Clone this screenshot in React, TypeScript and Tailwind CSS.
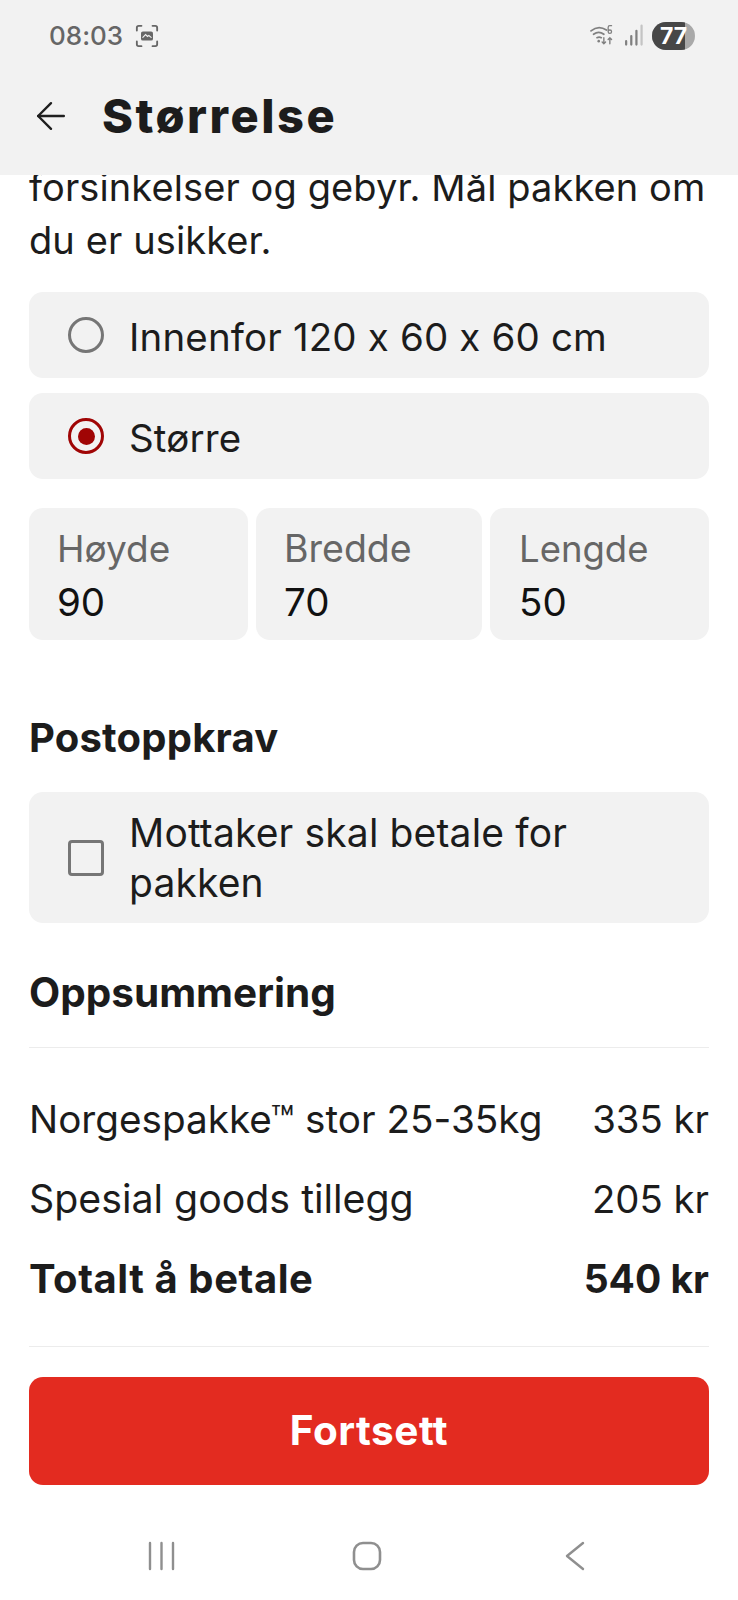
import { ArrowLeft } from "lucide-react";

function StatusBar() {
  return (
    <div className="flex h-[72px] items-center justify-between pl-[49px] pr-[43px]">
      <div className="flex items-center gap-[12px]">
        <span className="text-[26px] leading-none font-medium text-[#666666]">08:03</span>
        <svg width="24" height="24" viewBox="0 0 26 26" fill="none" stroke="#666666" strokeWidth="2" strokeLinecap="round">
          <path d="M2 7V4a2 2 0 0 1 2-2h3M19 2h3a2 2 0 0 1 2 2v3M24 19v3a2 2 0 0 1-2 2h-3M7 24H4a2 2 0 0 1-2-2v-3" />
          <rect x="6.5" y="8" width="13" height="10" rx="2" fill="#666666" stroke="none" />
          <path d="M8.5 14.5l3-3 2 2 1.5-1 2.5 2" stroke="#f2f2f2" strokeWidth="1.2" />
        </svg>
      </div>
      <div className="flex items-center gap-[6px]">
        <svg width="28" height="24" viewBox="0 0 32 28" fill="none" stroke="#808080" strokeLinecap="round">
          <path d="M2 8c6-5 12-5 18-1M5 12c4-3 8-3 12 0M9 16c2-1 3-1 5 0" strokeWidth="2" />
          <circle cx="11" cy="20" r="1.5" fill="#808080" stroke="none" />
          <path d="M17 16v7M15 21l2 2 2-2M24 23v-7M22 18l2-2 2 2" strokeWidth="1.6" />
          <path d="M26 2h-2a2 2 0 0 0-2 2v5a2 2 0 0 0 4 0 2 2 0 0 0-4 0" strokeWidth="1.5" />
        </svg>
        <svg width="20" height="24" viewBox="0 0 22 28" fill="none" strokeLinecap="round" strokeWidth="2.6">
          <path d="M3 24v-4M9 24V14M15 24V8" stroke="#808080" />
          <path d="M21 24V2" stroke="#c4c4c4" />
        </svg>
        <div className="relative ml-[3px] flex h-[28px] w-[43px] items-center justify-center overflow-hidden rounded-full bg-[#a9a9a9]">
          <div className="absolute inset-y-0 left-0 w-[33px] bg-[#474747]" />
          <span className="relative text-[23px] leading-none font-bold text-white">77</span>
        </div>
      </div>
    </div>
  );
}

function Header() {
  return (
    <header className="relative z-10 h-[175px] bg-[#f2f2f2]">
      <StatusBar />
      <div className="flex items-center pl-[29px] pt-[14px]">
        <ArrowLeft size={44} strokeWidth={1.3} className="text-[#1f1f1f]" />
        <h1 className="ml-[29px] text-[47px] leading-[60px] font-extrabold tracking-[2.5px] text-[#1c1c1c]">Størrelse</h1>
      </div>
    </header>
  );
}

function Radio({ checked }: { checked?: boolean }) {
  if (checked) {
    return (
      <span className="flex h-[36px] w-[36px] shrink-0 items-center justify-center rounded-full border-[3px] border-[#a00505]">
        <span className="h-[17px] w-[17px] rounded-full bg-[#a00505]" />
      </span>
    );
  }
  return <span className="h-[36px] w-[36px] shrink-0 rounded-full border-[3px] border-[#767676]" />;
}

function OptionRow({ label, checked }: { label: string; checked?: boolean }) {
  return (
    <div className="flex h-[86px] items-center gap-[25px] rounded-[14px] bg-[#f2f2f2] pl-[39px]">
      <Radio checked={checked} />
      <span className="pt-[3px] text-[38.5px] leading-[50px] tracking-[0.15px] text-[#1c1c1c]">{label}</span>
    </div>
  );
}

function SizeField({ label, value, className, labelClass }: { label: string; value: string; className: string; labelClass: string }) {
  return (
    <div className={`h-[132px] rounded-[14px] bg-[#f2f2f2] pt-[18px] ${className}`}>
      <div className={`leading-[46px] text-[#666666] ${labelClass}`}>{label}</div>
      <div className="mt-[7px] text-[38.5px] leading-[46px] text-[#111111]">{value}</div>
    </div>
  );
}

function PriceRow({ label, price, labelClass, priceClass }: { label: string; price: string; labelClass: string; priceClass: string }) {
  return (
    <div className="flex h-[80px] items-center justify-between text-[#1c1c1c]">
      <span className={`leading-[50px] ${labelClass}`}>{label}</span>
      <span className={`leading-[50px] ${priceClass}`}>{price}</span>
    </div>
  );
}

export default function App() {
  return (
    <div className="flex h-[1600px] w-[738px] flex-col overflow-hidden bg-white font-['Inter',sans-serif] [font-feature-settings:'calt'_0]">
      <Header />
      <main className="flex flex-1 flex-col px-[29px]">
        <p className="mt-[-14px] text-[38px] leading-[53px] tracking-[0.1px] text-[#1c1c1c] whitespace-nowrap">
          forsinkelser og gebyr. Mål pakken om
          <br />
          du er usikker.
        </p>

        <div className="mt-[25px] flex flex-col gap-[15px]">
          <OptionRow label="Innenfor 120 x 60 x 60 cm" />
          <OptionRow label="Større" checked />
        </div>

        <div className="mt-[29px] flex gap-[8px]">
          <SizeField label="Høyde" value="90" labelClass="text-[37px]" className="w-[219px] pl-[28px]" />
          <SizeField label="Bredde" value="70" labelClass="text-[37.5px]" className="w-[226px] pl-[28px]" />
          <SizeField label="Lengde" value="50" labelClass="text-[36.5px]" className="w-[219px] pl-[29px]" />
        </div>

        <h2 className="mt-[73px] text-[40px] leading-[50px] font-bold tracking-[0.2px] text-[#1c1c1c]">Postoppkrav</h2>

        <div className="mt-[29px] flex h-[131px] items-center gap-[25px] rounded-[14px] bg-[#f2f2f2] pl-[39px]">
          <span className="h-[36px] w-[36px] shrink-0 rounded-[4px] border-[3px] border-[#767676]" />
          <span className="text-[39px] leading-[50px] tracking-[0.15px] text-[#1c1c1c]">
            Mottaker skal betale for
            <br />
            pakken
          </span>
        </div>

        <h2 className="mt-[44px] text-[40.5px] leading-[52px] font-bold text-[#1c1c1c]">Oppsummering</h2>

        <div className="mt-[28px] border-t border-[#ececec] pt-[31px] pb-[27px]">
          <PriceRow label="Norgespakke™ stor 25-35kg" price="335 kr" labelClass="text-[38.7px]" priceClass="text-[38.3px]" />
          <PriceRow label="Spesial goods tillegg" price="205 kr" labelClass="text-[39.3px]" priceClass="text-[38.3px]" />
          <PriceRow label="Totalt å betale" price="540 kr" labelClass="text-[40px] font-bold tracking-[0.55px]" priceClass="text-[39px] font-bold" />
        </div>

        <div className="border-t border-[#ececec] pt-[30px]">
          <button className="flex h-[108px] w-full items-center justify-center rounded-[14px] bg-[#e32b20] text-[40.5px] font-bold tracking-[0.5px] text-white">
            Fortsett
          </button>
        </div>

        <nav className="mt-[56px] flex items-center pl-[119px]">
          <svg width="27" height="30" viewBox="0 0 27 30" fill="none" stroke="#8f8f8f" strokeWidth="2.4" strokeLinecap="round">
            <path d="M2 2v26M13.5 2v26M25 2v26" />
          </svg>
          <svg className="ml-[177px]" width="30" height="30" viewBox="0 0 30 30" fill="none" stroke="#8f8f8f" strokeWidth="2.6">
            <rect x="2" y="2" width="26" height="26" rx="9" />
          </svg>
          <svg className="ml-[183px]" width="20" height="30" viewBox="0 0 20 30" fill="none" stroke="#8f8f8f" strokeWidth="2.4" strokeLinecap="round" strokeLinejoin="round">
            <path d="M18 2L2 15l16 13" />
          </svg>
        </nav>
      </main>
    </div>
  );
}
